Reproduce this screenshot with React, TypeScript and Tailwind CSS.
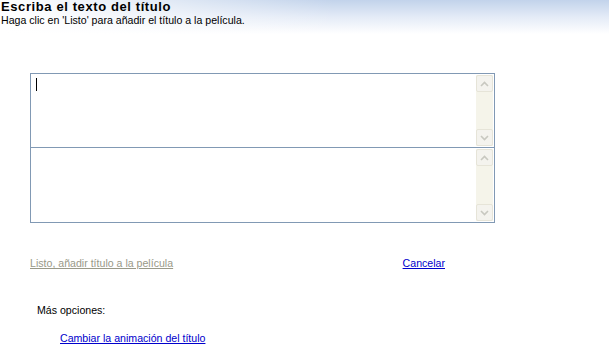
export default function App() {
  const ScrollBar = () => (
    <div className="flex h-full w-[17px] flex-col bg-[#f5f4ea]">
      <div className="flex h-[17px] w-[17px] items-center justify-center rounded-[2px] border border-[#e6e4d8] bg-[#f4f3ee]">
        <svg width="9" height="6" viewBox="0 0 9 6">
          <path d="M1 5 L4.5 1.5 L8 5" fill="none" stroke="#c8c8c0" strokeWidth="1.6" />
        </svg>
      </div>
      <div className="flex-1" />
      <div className="flex h-[17px] w-[17px] items-center justify-center rounded-[2px] border border-[#e6e4d8] bg-[#f4f3ee]">
        <svg width="9" height="6" viewBox="0 0 9 6">
          <path d="M1 1 L4.5 4.5 L8 1" fill="none" stroke="#c8c8c0" strokeWidth="1.6" />
        </svg>
      </div>
    </div>
  );

  return (
    <div className="h-[352px] w-[609px] bg-white font-['Liberation_Sans',Arial,sans-serif] text-black">
      <div className="h-[34px] bg-[linear-gradient(to_right,rgba(255,255,255,1)_0%,rgba(255,255,255,0)_55%),linear-gradient(to_bottom,#c2d3eb_0%,#e4ebf7_50%,#ffffff_100%)]">
        <div className="pl-[1px] text-[13px] font-bold leading-[14px] tracking-[0.6px]">Escriba el texto del título</div>
        <div className="pl-[1px] text-[10.6px] leading-[13px]">Haga clic en 'Listo' para añadir el título a la película.</div>
      </div>

      <div className="ml-[30px] mt-[39px] w-[465px] border border-[#8199b4]">
        <div className="flex h-[74px] border-b border-[#8199b4] bg-white p-[1px]">
          <div className="flex-1 pl-[4px] pt-[3px]">
            <div className="h-[13px] w-[1px] bg-black" />
          </div>
          <ScrollBar />
        </div>
        <div className="flex h-[74px] bg-white p-[1px]">
          <div className="flex-1" />
          <ScrollBar />
        </div>
      </div>

      <div className="ml-[30px] mt-[33px] flex w-[415px] justify-between text-[10.6px] leading-[14px]">
        <span className="text-[#999988] underline">Listo, añadir título a la película</span>
        <span className="text-[#0000cc] underline">Cancelar</span>
      </div>

      <div className="ml-[37px] mt-[33px] text-[10.6px] leading-[14px]">Más opciones:</div>
      <div className="ml-[60px] mt-[14px] text-[10.6px] leading-[14px] text-[#0000cc] underline">Cambiar la animación del título</div>
    </div>
  );
}
